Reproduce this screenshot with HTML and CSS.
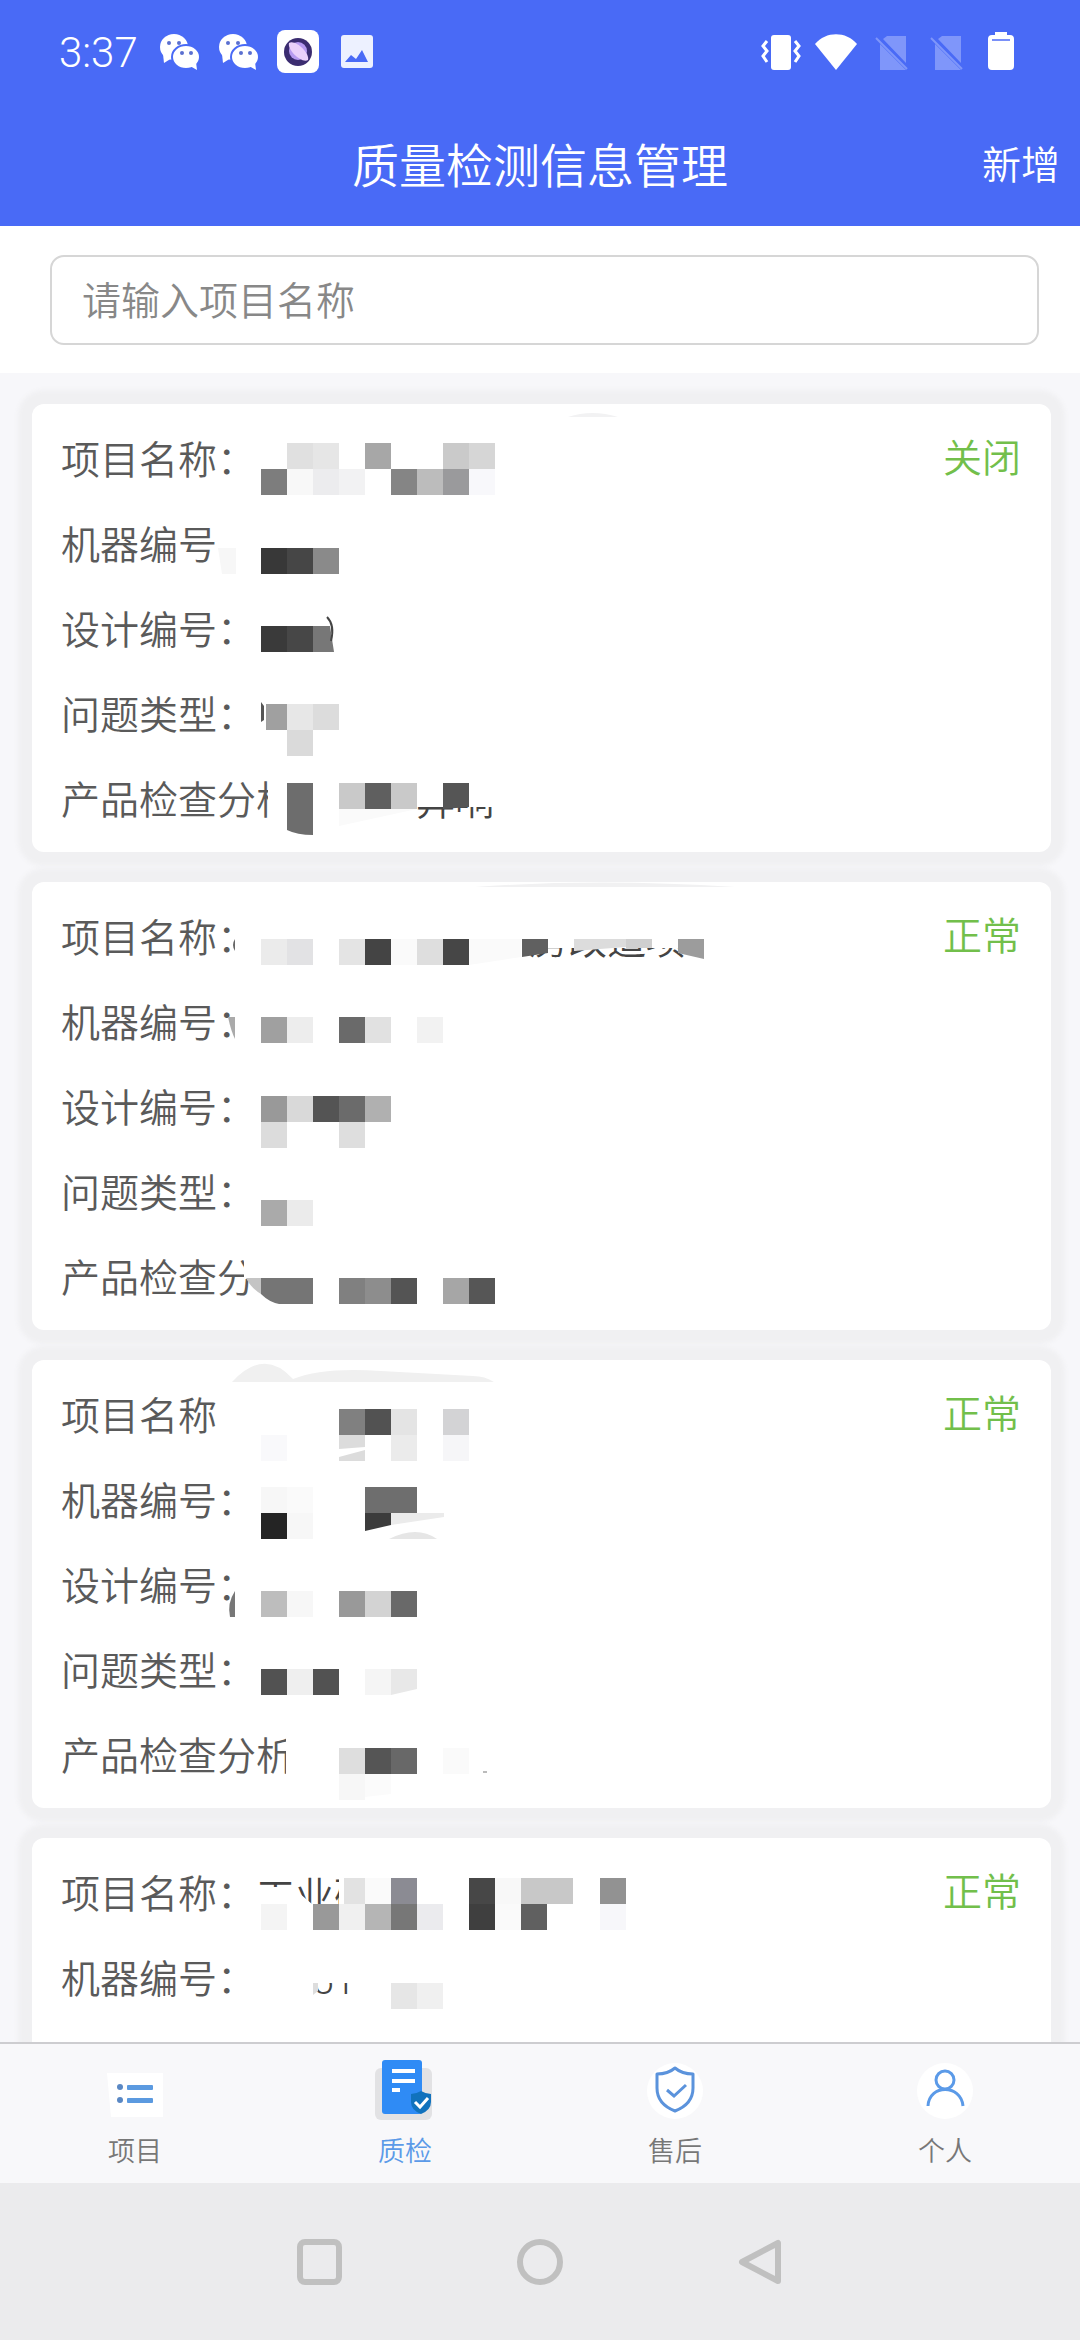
FILE: index.html
```
<!DOCTYPE html>
<html lang="zh-CN">
<head>
    <meta charset="UTF-8">
    <meta name="viewport" content="width=device-width, initial-scale=1.0">
    <title>质量检测信息管理</title>
    <link rel="stylesheet" href="styles.css">
</head>
<body>

    <header class="header">
        <div class="status-bar">
            <span class="time">3:37</span>
            <div class="status-left">
                <svg viewBox="0 0 44 44"><g fill="#fff"><ellipse cx="16" cy="17" rx="14" ry="13"/><path d="M5 24l1 9 8-5z"/></g><ellipse cx="28" cy="27" rx="14" ry="12" fill="#fff" stroke="#496af6" stroke-width="2"/><path d="M32 36l7 4-1-8z" fill="#fff"/><g fill="#5a6fd0"><circle cx="11" cy="13" r="2"/><circle cx="21" cy="13" r="2"/><circle cx="24" cy="23" r="2"/><circle cx="33" cy="23" r="2"/></g></svg>
                <svg viewBox="0 0 44 44"><g fill="#fff"><ellipse cx="16" cy="17" rx="14" ry="13"/><path d="M5 24l1 9 8-5z"/></g><ellipse cx="28" cy="27" rx="14" ry="12" fill="#fff" stroke="#496af6" stroke-width="2"/><path d="M32 36l7 4-1-8z" fill="#fff"/><g fill="#5a6fd0"><circle cx="11" cy="13" r="2"/><circle cx="21" cy="13" r="2"/><circle cx="24" cy="23" r="2"/><circle cx="33" cy="23" r="2"/></g></svg>
                <svg viewBox="0 0 44 44"><rect x="1" y="0" width="42" height="43" rx="8" fill="#fff"/><circle cx="22" cy="22" r="14" fill="#3b2c70"/><circle cx="22" cy="21" r="9" fill="#b79af0"/><path d="M13 13c6-4 21 10 19 17-6 4-21-10-19-17z" fill="#ead0fa"/></svg>
                <svg viewBox="0 0 44 44"><rect x="6" y="5" width="32" height="33" rx="3" fill="#edf1ff"/><path d="M10 32l6-7 5 4 6-9 6 12z" fill="#496af6"/></svg>
            </div>
            <div class="status-right">
                <svg viewBox="0 0 44 44"><rect x="12" y="5" width="20" height="35" rx="3" fill="#fff"/><path d="M8 11l-4 5 4 5-4 5 4 6M36 11l4 5-4 5 4 5-4 6" fill="none" stroke="#fff" stroke-width="3"/></svg>
                <svg viewBox="0 0 44 44"><path d="M22 40L1 14C12 1 32 1 43 14z" fill="#fff"/></svg>
                <svg viewBox="0 0 44 44"><path d="M18 6h19v27L14 9zM11 14l26 26H11z" fill="#7f96fa"/><path d="M7 8l31 31" stroke="#7f96fa" stroke-width="2"/></svg>
                <svg viewBox="0 0 44 44"><path d="M18 6h19v27L14 9zM11 14l26 26H11z" fill="#7f96fa"/><path d="M7 8l31 31" stroke="#7f96fa" stroke-width="2"/></svg>
                <svg viewBox="0 0 44 44"><path d="M16 2h12v3h3q4 0 4 4v27q0 4-4 4H13q-4 0-4-4V9q0-4 4-4h3z" fill="#fff"/><path d="M13 10h18" stroke="#7a90f8" stroke-width="2"/></svg>
            </div>
        </div>
        <div class="title-bar">
            <h1>质量检测信息管理</h1>
            <button type="button" class="add-btn">新增</button>
        </div>
    </header>

    <form class="search">
        <input type="text" name="project-name" aria-label="项目名称" placeholder="请输入项目名称">
    </form>

    <main class="list">
        <article class="card">
            <span class="status">关闭</span>
            <p>项目名称：</p>
            <p>机器编号：</p>
            <p>设计编号：</p>
            <p>问题类型：</p>
            <p>产品检查分析：</p>
            <svg class="mosaic">
                <g class="cover">
                    <path d="M199 36h12v42h-12zM186 120h30v44h-30zM236 370h90v60h-90z"/>
                </g>
                <text x="384" y="411">异响</text>
                <path class="cover" d="M375 370h95v33h-95z"/>
                <path d="M536 13q24-8 50 0z" fill="#f2f2f3"/>
                <g transform="translate(229 39)">
                    <rect x="26" fill="#e0e0e0"/><rect x="52" fill="#e6e6e6"/><rect x="104" fill="#a7a7a7"/><rect x="182" fill="#cacaca"/><rect x="208" fill="#d6d6d6"/>
                    <rect x="0" y="26" fill="#7d7d7d"/><rect x="26" y="26" fill="#f8f8f8"/><rect x="52" y="26" fill="#ececee"/><rect x="78" y="26" fill="#f2f2f3"/><rect x="130" y="26" fill="#858585"/><rect x="156" y="26" fill="#bcbcbc"/><rect x="182" y="26" fill="#9a9a9c"/><rect x="208" y="26" fill="#f8f8fb"/>
                </g>
                <path d="M186 144h18v26h-14z" fill="#f7f7f7"/>
                <g transform="translate(229 144)">
                    <rect x="0" fill="#383838"/><rect x="26" fill="#464646"/><rect x="52" fill="#8a8a8a"/>
                </g>
                <g transform="translate(229 222)">
                    <rect x="0" fill="#3a3a3a"/><rect x="26" fill="#474747"/><path d="M52 0h17l4 26H52z" fill="#777"/><path d="M66-9q8 8 4 24" fill="none" stroke="#444" stroke-width="2"/>
                </g>
                <g transform="translate(229 300)">
                    <path d="M0-2l3 4v14l-3 2z" fill="#555"/><path d="M5 0h21v26H5z" fill="#a0a0a0"/><rect x="26" fill="#e7e7e7"/><rect x="52" fill="#dcdcdc"/><rect x="26" y="26" fill="#dadada"/>
                </g>
                <g transform="translate(229 379)">
                    <path d="M26 0h26v52q-16 0-26-5z" fill="#6d6d6d"/><rect x="78" fill="#c9c9c9"/><rect x="104" fill="#5f5f5f"/><rect x="130" fill="#c9c9c9"/><path d="M182 0h26v24l-26 2z" fill="#555"/><path d="M78 26h78l-78 17z" fill="#fafafa"/>
                </g>
            </svg>
        </article>

        <article class="card">
            <span class="status">正常</span>
            <p>项目名称：</p>
            <p>机器编号：</p>
            <p>设计编号：</p>
            <p>问题类型：</p>
            <p>产品检查分析：</p>
            <svg class="mosaic">
                <path class="cover" d="M204 36h14v120h-14zM212 370h90v27h-90zM218 396h90v40h-90z"/>
                <text x="497" y="72">房改造项</text>
                <path class="cover" d="M490 36h170v30H490z"/>
                <path d="M443 5q124-9 260 0z" fill="#f1f1f2"/>
                <path d="M203 57q-4 6 0 12z" fill="#666"/>
                <g transform="translate(229 57)">
                    <rect x="0" fill="#ebebeb"/><rect x="26" fill="#e2e2e4"/><rect x="78" fill="#e4e4e4"/><rect x="104" fill="#444"/><rect x="130" fill="#fafafa"/><rect x="156" fill="#dedede"/><rect x="182" fill="#464646"/><path d="M208 0h52v18l-52 8z" fill="#fafafa"/>
                    <path d="M261 0h26v14l-26 4z" fill="#606060"/><path d="M313 0h52v8l-52 4z" fill="#dcdcdc"/><path d="M365 0h26v9h-26z" fill="#cfcfcf"/><path d="M417 0h26v20l-26-6z" fill="#9c9c9c"/>
                </g>
                <g transform="translate(229 135)">
                    <path d="M-33 0h7v22q-4-8-7-22z" fill="#aaa"/><rect x="0" fill="#a0a0a0"/><rect x="26" fill="#ededed"/><rect x="78" fill="#6a6a6a"/><rect x="104" fill="#e1e1e1"/><rect x="156" fill="#f2f2f2"/>
                </g>
                <g transform="translate(229 214)">
                    <rect x="0" fill="#999"/><rect x="26" fill="#d9d9d9"/><rect x="52" fill="#545454"/><rect x="78" fill="#6b6b6b"/><rect x="104" fill="#b0b0b0"/><rect x="0" y="26" fill="#dcdcdc"/><rect x="78" y="26" fill="#dedede"/>
                </g>
                <g transform="translate(229 318)">
                    <rect x="0" fill="#aaa"/><rect x="26" fill="#ebebeb"/>
                </g>
                <g transform="translate(229 396)">
                    <path d="M-15 0H0v16q-10-6-15-16z" fill="#c4c4c4"/><path d="M0 0h52v26H18Q8 24 0 16z" fill="#757575"/><rect x="78" fill="#808080"/><rect x="104" fill="#8d8d8d"/><rect x="130" fill="#545454"/><rect x="182" fill="#a6a6a6"/><rect x="208" fill="#565656"/>
                </g>
            </svg>
        </article>

        <article class="card">
            <span class="status">正常</span>
            <p>项目名称：</p>
            <p>机器编号：</p>
            <p>设计编号：</p>
            <p>问题类型：</p>
            <p>产品检查分析：</p>
            <svg class="mosaic">
                <path class="cover" d="M186 36h30v44h-30zM254 370h70v60h-70z"/>
                <path d="M200 22q32-35 61-3 30-12 88-8l92 5q12 0 21 6z" fill="#f0f0f0"/>
                <g transform="translate(229 49)">
                    <rect x="78" fill="#808080"/><rect x="104" fill="#525252"/><rect x="130" fill="#e4e4e4"/><rect x="182" fill="#d3d3d5"/>
                    <rect x="0" y="26" fill="#f9f9fb"/><path d="M78 26h26v12l-26 2zM78 48l26-7v11H78z" fill="#dcdcdc"/><rect x="130" y="26" fill="#ebebeb"/><rect x="182" y="26" fill="#f6f6f8"/>
                </g>
                <g transform="translate(229 127)">
                    <rect x="0" fill="#f7f7f7"/><rect x="26" fill="#fafafa"/><rect x="104" fill="#6e6e6e"/><rect x="130" fill="#6e6e6e"/>
                    <rect x="0" y="26" fill="#242424"/><rect x="26" y="26" fill="#f7f7f7"/><path d="M104 26h26v12l-26 6z" fill="#3c3c3c"/><path d="M130 26h53v4l-53 8z" fill="#ebebeb"/><path d="M128 52q28-14 48 0z" fill="#e6e6e6"/>
                </g>
                <g transform="translate(229 231)">
                    <path d="M-26 0v26h-5q-3-14 5-26z" fill="#777"/><rect x="0" fill="#bdbdbd"/><rect x="26" fill="#f7f7f7"/><rect x="78" fill="#999"/><rect x="104" fill="#d3d3d3"/><rect x="130" fill="#696969"/>
                </g>
                <g transform="translate(229 309)">
                    <rect x="0" fill="#525252"/><rect x="26" fill="#efefef"/><rect x="52" fill="#525252"/><rect x="104" fill="#f5f5f5"/><path d="M130 0h26v20l-26 6z" fill="#e8e8e8"/>
                </g>
                <g transform="translate(229 388)">
                    <rect x="78" fill="#dedede"/><rect x="104" fill="#555"/><rect x="130" fill="#686868"/><rect x="182" fill="#fafafa"/><rect x="78" y="26" fill="#f7f7f7"/><path d="M104 26h26v20l-26 3z" fill="#fbfbfb"/><path d="M222 23h4v2h-4z" fill="#bbb"/>
                </g>
            </svg>
        </article>

        <article class="card last">
            <span class="status">正常</span>
            <p>项目名称：</p>
            <p>机器编号：</p>
            <svg class="mosaic">
                <text x="224" y="72">工业研</text>
                <path class="cover" d="M220 49h40l20 17h70v20H220zM307 36h44v30h-44z"/>
                <text x="280" y="156">51</text>
                <path class="cover" d="M275 120h60v25h-60z"/>
                <g transform="translate(229 40)">
                    <path d="M83 0h21v26H83z" fill="#e2e2e2"/><rect x="104" fill="#fafafa"/><rect x="130" fill="#8b8b93"/><rect x="208" fill="#474747"/><rect x="234" fill="#f8f8f8"/><rect x="260" fill="#c8c8c8"/><rect x="286" fill="#c8c8c8"/><rect x="339" fill="#929292"/>
                    <rect x="0" y="26" fill="#f4f4f4"/><rect x="52" y="26" fill="#999"/><rect x="78" y="26" fill="#f0f0f0"/><rect x="104" y="26" fill="#b5b5b5"/><rect x="130" y="26" fill="#777"/><rect x="156" y="26" fill="#ebebee"/><rect x="208" y="26" fill="#3f3f3f"/><rect x="234" y="26" fill="#fafafa"/><rect x="260" y="26" fill="#606060"/><rect x="339" y="26" fill="#f7f7fa"/>
                </g>
                <g transform="translate(229 145)">
                    <path d="M52 0h5v8l-5 4z" fill="#ddd"/><rect x="130" fill="#e6e6e6"/><rect x="156" fill="#f0f0f0"/>
                </g>
            </svg>
        </article>
    </main>

    <nav class="tab-bar">
        <a href="#project">
            <svg viewBox="0 0 64 64"><path d="M4 14h56v44H8z" fill="#fff"/><g fill="#5b9ae0"><rect x="24" y="26" width="26" height="5" rx="1"/><rect x="24" y="39" width="26" height="5" rx="1"/></g><g fill="#5a88c4"><circle cx="17" cy="28" r="3"/><circle cx="17" cy="41" r="3"/></g></svg>
            项目
        </a>
        <a href="#quality" class="active">
            <svg viewBox="0 0 64 64"><rect x="2" y="9" width="57" height="52" rx="6" fill="#e2e2e4"/><rect x="9" y="1" width="40" height="54" rx="3" fill="#2f8bf5"/><path d="M19 12h23M19 22h23M19 31h8" stroke="#fff" stroke-width="4"/><path d="M48 32q5 3 10 3v8q0 8-10 12-10-4-10-12v-8q5 0 10-3z" fill="#1172bd"/><path d="M42 43l5 5 8-9" fill="none" stroke="#fff" stroke-width="3"/></svg>
            质检
        </a>
        <a href="#after-sale">
            <svg viewBox="0 0 64 64"><circle cx="32" cy="32" r="28" fill="#fff"/><path d="M32 9q7 6 18 6v14q0 16-18 23Q14 45 14 29V15q11 0 18-6z" fill="none" stroke="#5b93dc" stroke-width="3" stroke-linejoin="round"/><path d="M24 31l7 6 12-11" fill="none" stroke="#5b93dc" stroke-width="3"/></svg>
            售后
        </a>
        <a href="#me">
            <svg viewBox="0 0 64 64"><circle cx="32" cy="32" r="28" fill="#fff"/><g fill="none" stroke="#5b9ae8" stroke-width="3"><circle cx="32" cy="21" r="9"/><path d="M15 47c1-22 33-22 35 0"/></g></svg>
            个人
        </a>
    </nav>

    <div class="system-nav">
        <button type="button" aria-label="最近任务"><svg viewBox="0 0 48 48"><rect x="4" y="4" width="39" height="40" rx="5"/></svg></button>
        <button type="button" aria-label="主页"><svg viewBox="0 0 48 48"><circle cx="24" cy="24" r="20"/></svg></button>
        <button type="button" aria-label="返回"><svg viewBox="0 0 48 48"><path d="M42 5v38L6 24z"/></svg></button>
    </div>

</body>
</html>
```

FILE: styles.css
```
* {
    box-sizing: border-box;
}

body {
    margin: 0;
    height: 100vh;
    display: flex;
    flex-direction: column;
    font-family: Roboto, 'Noto Sans CJK SC', sans-serif;
    font-weight: 350;
    font-size: 39px;
    color: #5a5a5a;
    background-color: #f7f7fa;
}

svg {
    display: block;
}

button {
    padding: 0;
    border: none;
    background: none;
    font: inherit;
    color: inherit;
    cursor: pointer;
}

/* En-tête bleu */
.header {
    flex: none;
    background-color: #496af6;
    color: #fff;
}

.status-bar {
    display: flex;
    align-items: center;
    height: 104px;
    padding: 0 57px 0 59px;
}

.status-bar svg {
    width: 44px;
    height: 44px;
}

.time {
    width: 99px;
    font-size: 42px;
    font-weight: 300;
}

.status-left {
    display: flex;
    gap: 15px;
}

.status-right {
    display: flex;
    gap: 11px;
    margin-left: auto;
}

.title-bar {
    position: relative;
    height: 122px;
    display: flex;
    align-items: center;
    justify-content: center;
    padding-bottom: 6px;
}

.title-bar h1 {
    margin: 0;
    font-size: 47px;
    font-weight: 350;
}

.add-btn {
    position: absolute;
    right: 20px;
}

/* Recherche */
.search {
    flex: none;
    padding: 29px 41px 28px 50px;
    background-color: #fff;
}

.search input {
    display: block;
    width: 100%;
    height: 90px;
    padding: 4px 31px 0 30px;
    border: 2px solid #d6d6d6;
    border-radius: 14px;
    background-color: #fff;
    font: inherit;
    color: #555;
    outline: none;
}

.search input::placeholder {
    color: #888;
}

/* Liste des fiches */
.list {
    flex: 1;
    min-height: 0;
    overflow: hidden;
    display: flex;
    flex-direction: column;
    gap: 30px;
    padding: 31px 29px 0 32px;
}

.card {
    position: relative;
    flex: none;
    padding: 15px 30px 8px 29px;
    border-radius: 12px;
    background-color: #fff;
    box-shadow: 0 0 5px 14px #f0f0f2;
}

/* La dernière fiche va jusqu'aux onglets */
.card.last {
    flex: 1;
    border-radius: 12px 12px 0 0;
}

.card p {
    margin: 0;
    line-height: 85px;
}

.status {
    float: right;
    line-height: 80px;
    color: #72bf4b;
}

/* Données masquées */
.mosaic {
    position: absolute;
    top: 0;
    left: 0;
    width: 80%;
    height: 100%;
    fill: #444;
}

.mosaic rect {
    width: 26px;
    height: 26px;
}

.mosaic .cover {
    fill: #fff;
}

/* Onglets */
.tab-bar {
    flex: none;
    display: flex;
    height: 141px;
    padding-top: 15px;
    border-top: 2px solid #cdcdd0;
    background-color: #f8f8fa;
}

.tab-bar a {
    flex: 1;
    display: flex;
    flex-direction: column;
    align-items: center;
    gap: 11px;
    font-size: 27px;
    line-height: 36px;
    color: #777;
    text-decoration: none;
}

.tab-bar a.active {
    color: #5b9ae8;
}

.tab-bar svg {
    width: 64px;
    height: 64px;
}

/* Barre système */
.system-nav {
    flex: none;
    display: flex;
    align-items: center;
    justify-content: center;
    gap: 172px;
    height: 157px;
    background-color: #ebebed;
}

.system-nav svg {
    width: 48px;
    height: 48px;
    fill: none;
    stroke: #c0c0c0;
    stroke-width: 6;
    stroke-linejoin: round;
}
```
